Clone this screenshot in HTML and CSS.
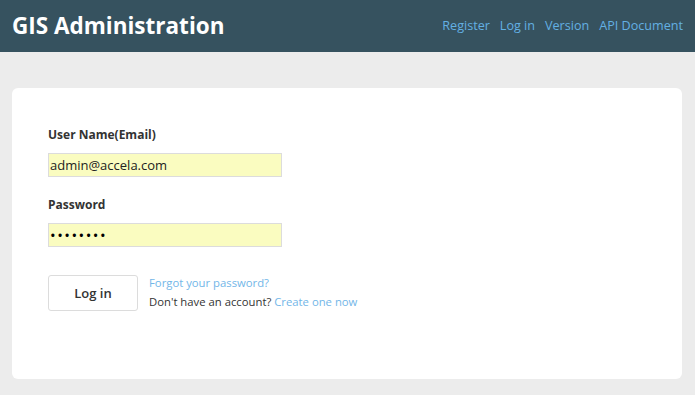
FILE: index.html
```html
<!DOCTYPE html>
<html lang="en">
<head>
  <meta charset="UTF-8">
  <title>GIS Administration</title>
  <link rel="stylesheet" href="styles.css">
</head>
<body>
  <header class="topbar">
    <h1 class="brand">GIS Administration</h1>
    <nav class="nav">
      <a href="#">Register</a>
      <a href="#">Log in</a>
      <a href="#">Version</a>
      <a href="#">API Document</a>
    </nav>
  </header>

  <main class="page">
    <div class="card">
      <form class="login-form">
        <label class="field-label" for="email">User Name(Email)</label>
        <input class="field-input" id="email" type="text" value="admin@accela.com">

        <label class="field-label" for="password">Password</label>
        <input class="field-input field-secret" id="password" type="password" value="password">

        <div class="actions">
          <button class="btn" type="button">Log in</button>
          <div class="links">
            <a href="#">Forgot your password?</a>
            <p>Don't have an account? <a href="#">Create one now</a></p>
          </div>
        </div>
      </form>
    </div>
  </main>
</body>
</html>
```

FILE: styles.css
```css
body {
  margin: 0;
  font-family: "Open Sans", "Noto Sans", Arial, sans-serif;
  background-color: #ececec;
  color: #333;
}
.topbar {
  display: flex;
  align-items: center;
  justify-content: space-between;
  height: 52px;
  padding: 0 12px;
  background-color: #36525f;
}
.brand {
  margin: 0 0 2px;
  font-size: 22.5px;
  font-weight: 700;
  color: #fff;
}
.nav {
  display: flex;
  gap: 10px;
  margin-bottom: 2px;
}
.nav a {
  color: #63b0e3;
  font-size: 12.6px;
  text-decoration: none;
}
.page {
  padding: 36px 13px 15px 12px;
}
.card {
  background-color: #fff;
  border-radius: 6px;
  height: 291px;
  padding: 38px 36px 0;
  box-sizing: border-box;
}
.login-form {
  display: flex;
  flex-direction: column;
  align-items: flex-start;
}
.field-label {
  font-size: 12px;
  font-weight: 700;
  margin-bottom: 10px;
}
.field-input {
  width: 234px;
  height: 24px;
  box-sizing: border-box;
  border: 1px solid #dcdcdc;
  background-color: #fafcc0;
  padding: 0 1px;
  font-family: inherit;
  font-size: 13px;
  color: #222;
  margin-bottom: 19px;
}
.field-secret {
  font-size: 15px;
  letter-spacing: 1.5px;
  color: #000;
}
.actions {
  display: flex;
  gap: 11px;
  margin-top: 9px;
}
.btn {
  width: 90px;
  height: 36px;
  border: 1px solid #dcdcdc;
  border-radius: 3px;
  background-color: #fff;
  font-family: inherit;
  font-size: 13px;
  font-weight: 600;
  color: #333;
}
.links {
  font-size: 11.3px;
}
.links a {
  color: #72b6e8;
  text-decoration: none;
}
.links p {
  margin: 4px 0 0;
  color: #333;
}
```
